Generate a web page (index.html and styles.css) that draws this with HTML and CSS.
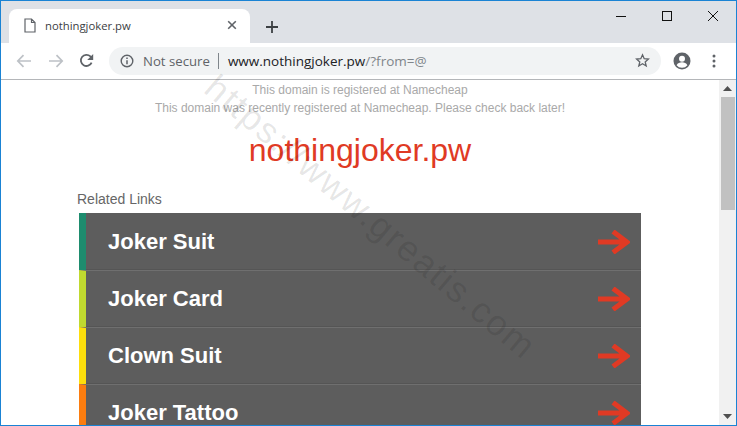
FILE: index.html
```html
<!DOCTYPE html>
<html lang="en">
<head>
<meta charset="utf-8">
<title>nothingjoker.pw</title>
<link rel="stylesheet" href="styles.css">
</head>
<body>
<div class="window">
  <header class="tabstrip">
    <div class="tab">
      <svg class="tab-doc" width="12" height="15" viewBox="0 0 12 15"><path d="M1 1h6.500L11 4.500V14H1z M7.500 1v3.500H11" fill="none" stroke="#5f6368" stroke-width="1.200"/></svg>
      <span class="tab-title">nothingjoker.pw</span>
      <svg class="tab-close" width="10" height="10" viewBox="0 0 10 10"><path d="M1.200 1.200l7.600 7.600M8.800 1.200l-7.600 7.600" stroke="#5f6368" stroke-width="1.600"/></svg>
    </div>
    <svg class="newtab" width="14" height="14" viewBox="0 0 14 14"><path d="M7 1v12M1 7h12" stroke="#3c4043" stroke-width="1.800"/></svg>
    <div class="winctl">
      <svg width="10" height="10" viewBox="0 0 10 10"><path d="M0 5.500h10" stroke="#111" stroke-width="1"/></svg>
      <svg width="10" height="10" viewBox="0 0 10 10"><rect x="0.500" y="0.500" width="9" height="9" fill="none" stroke="#111" stroke-width="1"/></svg>
      <svg width="10" height="10" viewBox="0 0 10 10"><path d="M0 0l10 10M10 0L0 10" stroke="#111" stroke-width="1"/></svg>
    </div>
  </header>
  <nav class="toolbar">
    <svg class="navbtn" width="16" height="14" viewBox="0 0 16 14"><path d="M15 7H2M7.500 1.200L1.800 7l5.700 5.800" fill="none" stroke="#bdc1c6" stroke-width="1.700"/></svg>
    <svg class="navbtn" width="16" height="14" viewBox="0 0 16 14"><path d="M1 7h13M8.500 1.200L14.200 7l-5.700 5.800" fill="none" stroke="#bdc1c6" stroke-width="1.700"/></svg>
    <svg class="navbtn reload" width="15" height="15" viewBox="0 0 15 15"><path d="M12.600 9.600A5.600 5.600 0 1 1 11.400 3.400L13.200 5.200" fill="none" stroke="#5f6368" stroke-width="1.800"/><path d="M14.200 1v6h-6z" fill="#5f6368"/></svg>
    <div class="omnibox">
      <svg class="info" width="14" height="14" viewBox="0 0 14 14"><circle cx="7" cy="7" r="5.800" fill="none" stroke="#5f6368" stroke-width="1.400"/><path d="M7 6.200v4M7 3.600v1.500" stroke="#5f6368" stroke-width="1.500"/></svg>
      <span class="secure">Not secure</span>
      <span class="divider"></span>
      <span class="url">www.nothingjoker.pw<span class="url-rest">/?from=@</span></span>
      <svg class="star" width="15" height="15" viewBox="0 0 15 15"><path d="M7.500 1.800l1.700 3.900 4.200.4-3.200 2.800 1 4.100-3.700-2.200-3.700 2.200 1-4.100L1.600 6.100l4.200-.4z" fill="none" stroke="#5f6368" stroke-width="1.300"/></svg>
    </div>
    <svg class="avatar" width="18" height="18" viewBox="0 0 18 18"><circle cx="9" cy="9" r="8.500" fill="#5f6368"/><circle cx="9" cy="6.800" r="3" fill="#fff"/><path d="M3.600 13.200c1-2.200 3.200-3 5.400-3s4.400.8 5.400 3A6.800 6.800 0 0 1 9 15.800a6.800 6.800 0 0 1-5.400-2.600z" fill="#fff"/></svg>
    <svg class="menu" width="4" height="14" viewBox="0 0 4 14"><circle cx="2" cy="2" r="1.500" fill="#5f6368"/><circle cx="2" cy="7" r="1.500" fill="#5f6368"/><circle cx="2" cy="12" r="1.500" fill="#5f6368"/></svg>
  </nav>
  <div class="viewport">
    <main class="page">
      <p class="notice">This domain is registered at Namecheap</p>
      <p class="notice">This domain was recently registered at Namecheap. Please check back later!</p>
      <h1 class="domain">nothingjoker.pw</h1>
      <div class="links">
        <h2 class="links-title">Related Links</h2>
        <ul class="link-list">
          <li class="link c1"><span>Joker Suit</span><svg class="arrow" width="32" height="24" viewBox="0 0 32 24"><path d="M0 12h28M15 1.500l14 10.500-14 10.500" fill="none" stroke="#e03a24" stroke-width="5"/></svg></li>
          <li class="link c2"><span>Joker Card</span><svg class="arrow" width="32" height="24" viewBox="0 0 32 24"><path d="M0 12h28M15 1.500l14 10.500-14 10.500" fill="none" stroke="#e03a24" stroke-width="5"/></svg></li>
          <li class="link c3"><span>Clown Suit</span><svg class="arrow" width="32" height="24" viewBox="0 0 32 24"><path d="M0 12h28M15 1.500l14 10.500-14 10.500" fill="none" stroke="#e03a24" stroke-width="5"/></svg></li>
          <li class="link c4"><span>Joker Tattoo</span><svg class="arrow" width="32" height="24" viewBox="0 0 32 24"><path d="M0 12h28M15 1.500l14 10.500-14 10.500" fill="none" stroke="#e03a24" stroke-width="5"/></svg></li>
        </ul>
      </div>
    </main>
    <aside class="scrollbar">
      <svg class="sb-arrow" width="9" height="5" viewBox="0 0 9 5"><path d="M4.500 0L9 5H0z" fill="#505050"/></svg>
      <div class="sb-thumb"></div>
      <div class="sb-track"></div>
      <svg class="sb-arrow" width="9" height="5" viewBox="0 0 9 5"><path d="M0 0h9L4.500 5z" fill="#505050"/></svg>
    </aside>
  </div>
  <div class="watermark">https://www.greatis.com</div>
</div>
</body>
</html>
```
FILE: styles.css
```css
* { box-sizing: border-box; }
html, body { margin: 0; padding: 0; height: 100%; overflow: hidden; background: #fff; }
body { font-family: "Liberation Sans", Arial, sans-serif; }
.window {
  position: relative;
  width: 737px;
  height: 426px;
  display: flex;
  flex-direction: column;
  overflow: hidden;
  border: 1px solid #1a83d4;
}
.tabstrip {
  height: 42px;
  flex: none;
  background: #dee1e6;
  display: flex;
  align-items: flex-end;
  padding-left: 8px;
}
.tab {
  width: 241px;
  height: 34px;
  background: #fff;
  border-radius: 8px 8px 0 0;
  display: flex;
  align-items: center;
  padding: 0 13px 2px 15px;
}
.tab-doc { flex: none; }
.tab-title {
  font: 11.3px "Open Sans", "Liberation Sans", sans-serif;
  color: #3c4043;
  margin-left: 9px;
  flex: 1;
}
.newtab { margin: 0 0 9px 15px; }
.winctl {
  margin-left: auto;
  align-self: flex-start;
  display: flex;
  gap: 36px;
  padding: 10px 18px 0 0;
}
.toolbar {
  height: 37px;
  flex: none;
  background: #fff;
  border-bottom: 1px solid #b4b6b9;
  display: flex;
  align-items: center;
  padding: 0 17px 1px 15px;
}
.navbtn { flex: none; margin-right: 16px; }
.reload { margin: 0 15px 0 -1px; }
.omnibox {
  width: 552px;
  height: 28px;
  background: #f1f3f4;
  border-radius: 14px;
  display: flex;
  align-items: center;
  padding: 0 11px 0 11px;
  font-family: "Open Sans", "Liberation Sans", sans-serif;
}
.secure { color: #5f6368; margin-left: 9px; font-size: 13.2px; }
.divider { width: 1px; height: 16px; background: #80868b; margin: 0 9px 0 8px; }
.url { color: #202124; font-size: 13.500px; }
.url-rest { color: #80868b; }
.star { margin-left: auto; }
.avatar { margin-left: 12px; flex: none; }
.menu { margin-left: 21px; flex: none; }
.viewport { flex: 1; min-height: 0; display: flex; }
.page { flex: 1; min-width: 0; overflow: hidden; padding-top: 1px; }
.notice {
  margin: 0;
  text-align: center;
  font-size: 12px;
  line-height: 18px;
  height: 18px;
  color: #a9a9a9;
  width: 718px;
}
.domain {
  margin: 14px 0 0;
  width: 718px;
  text-align: center;
  font-weight: 400;
  font-size: 32px;
  line-height: 38px;
  color: #e03a24;
}
.links { margin: 21px 0 0 76px; }
.links-title {
  margin: 0 0 5px;
  font-size: 14px;
  font-weight: 400;
  line-height: 18px;
  color: #666;
}
.link-list { list-style: none; margin: 0 0 0 2px; padding: 0; width: 562px; }
.link {
  height: 57px;
  background: #5d5d5d;
  border-left: 7px solid #1e8c6e;
  box-shadow: inset 0 -1px 0 #555;
  display: flex;
  align-items: center;
  justify-content: space-between;
  padding: 1px 11px 0 22px;
  color: #fff;
  font-size: 22px;
  font-weight: 700;
}
.link + .link { border-top: 1px solid #6f6f6f; padding-top: 0; }
.c2 { border-left-color: #c0d92f; }
.c3 { border-left-color: #fdde0c; }
.c4 { border-left-color: #fb7d10; }
.scrollbar {
  width: 17px;
  flex: none;
  background: #f1f1f1;
  display: flex;
  flex-direction: column;
  align-items: center;
}
.sb-arrow { flex: none; margin: 6px 0; }
.sb-thumb { width: 14px; height: 113px; background: #c1c1c1; flex: none; }
.sb-track { flex: 1; }
.watermark {
  position: absolute;
  left: 160px;
  top: 195px;
  font-size: 36px;
  letter-spacing: 1.7px;
  white-space: nowrap;
  color: rgba(0, 0, 0, 0.1);
  transform: rotate(40deg);
  transform-origin: center;
  pointer-events: none;
}
```
